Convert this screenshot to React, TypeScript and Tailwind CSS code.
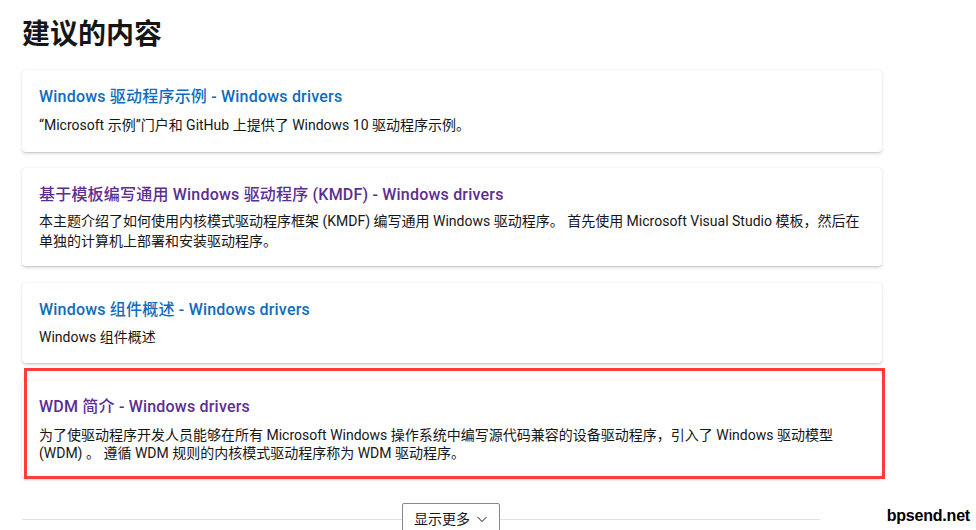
import React from "react";

const font = { fontFamily: 'Roboto, "Noto Sans CJK SC", sans-serif' };

function Card({
  title,
  desc,
  visited,
  pad,
  descGap,
  descLeading = "leading-[20px]",
}: {
  title: React.ReactNode;
  desc: React.ReactNode;
  visited?: boolean;
  pad: string;
  descGap: string;
  descLeading?: string;
}) {
  return (
    <div
      className={`bg-white rounded-[4px] shadow-[0_1.6px_3.6px_0_rgba(0,0,0,0.13),0_0.3px_0.9px_0_rgba(0,0,0,0.11)] px-[17px] pt-[15px] ${pad}`}
    >
      <div
        className={`text-[16px] leading-[24px] font-medium tracking-[0.2px] ${
          visited ? "text-[#5c2e91]" : "text-[#0f6cbd]"
        }`}
      >
        {title}
      </div>
      <div className={`${descGap} text-[14px] ${descLeading} text-[#161616]`}>{desc}</div>
    </div>
  );
}

export default function App() {
  return (
    <div className="w-[976px] h-[530px] bg-white overflow-hidden relative" style={font}>
      <div className="pl-[22px] w-[882px]">
        <h2
          className="pt-[14px] text-[28px] leading-[36px] font-bold text-[#161616]"
          style={{ fontFamily: '"Noto Sans CJK SC", sans-serif' }}
        >
          建议的内容
        </h2>
        <div className="mt-[20px] flex flex-col">
          <Card
            pad="pb-[17px]"
            descGap="mt-[6px]"
            title="Windows 驱动程序示例 - Windows drivers"
            desc="“Microsoft 示例”门户和 GitHub 上提供了 Windows 10 驱动程序示例。"
          />
          <div className="h-[16px]" />
          <Card
            visited
            pad="pb-[15px]"
            descGap="mt-[4px]"
            title="基于模板编写通用 Windows 驱动程序 (KMDF) - Windows drivers"
            desc={
              <>
                本主题介绍了如何使用内核模式驱动程序框架 (KMDF) 编写通用 Windows 驱动程序。 首先使用 Microsoft Visual Studio 模板，然后在
                <br />
                单独的计算机上部署和安装驱动程序。
              </>
            }
          />
          <div className="h-[17px]" />
          <Card
            pad="pb-[16px]"
            descGap="mt-[5px]"
            title="Windows 组件概述 - Windows drivers"
            desc="Windows 组件概述"
          />
          <div className="h-[17px]" />
          <div className="relative">
            <Card
              visited
              pad="pb-[16px]"
              descGap="mt-[7px]"
              descLeading="leading-[18px]"
              title="WDM 简介 - Windows drivers"
              desc={
                <>
                  为了使驱动程序开发人员能够在所有 Microsoft Windows 操作系统中编写源代码兼容的设备驱动程序，引入了 Windows 驱动模型
                  <br />
                  (WDM) 。 遵循 WDM 规则的内核模式驱动程序称为 WDM 驱动程序。
                </>
              }
            />
            <div className="absolute left-[2px] -right-[3px] -top-[12px] -bottom-[1px] border-[3px] border-[#ff3b3b] pointer-events-none" />
          </div>
        </div>
        <div className="relative mt-[25px] flex justify-center">
          <div className="absolute left-0 right-0 top-[16px] h-px bg-[#e1e1e1]" />
          <button className="relative bg-white border border-[#8a8886] rounded-[2px] px-[11px] h-[32px] flex items-center gap-[6px] text-[14px] text-[#161616] ml-[-2px]">
            显示更多
            <svg width="12" height="12" viewBox="0 0 12 12" fill="none" stroke="#161616" strokeWidth="1">
              <path d="M1.5 4 L6 8.5 L10.5 4" />
            </svg>
          </button>
        </div>
      </div>
      <div
        className="absolute right-0 bottom-0 w-[156px] h-[28px] bg-white flex items-center justify-end pr-[6px] text-[16px] font-black text-black tracking-[-0.2px]"
        style={{ fontFamily: '"Liberation Sans", Arial, sans-serif' }}
      >
        bpsend.net
      </div>
    </div>
  );
}
